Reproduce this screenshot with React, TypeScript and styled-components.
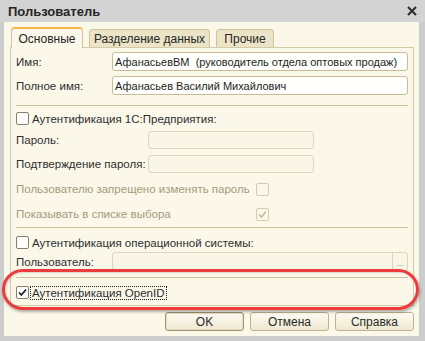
import styled, { createGlobalStyle } from 'styled-components';

const GlobalStyle = createGlobalStyle`
  html, body {
    margin: 0;
    padding: 0;
    background: #cfcfcf;
  }
  body {
    font-family: 'Liberation Sans', Arial, sans-serif;
    font-size: 11.5px;
    color: #2a2a2a;
  }
  * {
    box-sizing: border-box;
  }
`;

const Window = styled.div`
  position: relative;
  width: 425px;
  height: 341px;
  background: #cdcdcd;
  display: flex;
  flex-direction: column;
  overflow: hidden;
`;

const TitleBar = styled.div`
  height: 23px;
  padding: 0 8px;
  display: flex;
  align-items: center;
  justify-content: space-between;
  background: #d3d3d3;
`;

const Title = styled.span`
  font-weight: bold;
  font-size: 13px;
  color: #262626;
`;

const Body = styled.div`
  flex: 1;
  margin: 0 6px 5px 4px;
  padding: 5px 5px 5px 6px;
  background: #fbf8ea;
  display: flex;
  flex-direction: column;
`;

const TabStrip = styled.div`
  display: flex;
  align-items: flex-end;
  gap: 6px;
  height: 20px;
  padding-left: 1px;
  position: relative;
  z-index: 1;
`;

const Tab = styled.div<{ $active?: boolean; $width: number }>`
  width: ${(p) => p.$width}px;
  height: ${(p) => (p.$active ? 21 : 18)}px;
  margin-bottom: ${(p) => (p.$active ? -1 : 0)}px;
  display: flex;
  align-items: center;
  justify-content: center;
  padding-top: ${(p) => (p.$active ? 1 : 0)}px;
  border: 1px solid #cdc39c;
  border-bottom: none;
  border-top: ${(p) => (p.$active ? '2px solid #f2b84a' : '1px solid #cdc39c')};
  border-radius: 4px 4px 0 0;
  background: ${(p) => (p.$active ? '#fbf8ea' : '#ebe4c6')};
  color: #262626;
  font-size: 12px;
`;

const Panel = styled.div`
  border: 1px solid #d3caa6;
  padding: 4px 5px 6px 5px;
  display: flex;
  flex-direction: column;
`;

const Row = styled.div<{ $top?: number; $height: number }>`
  display: flex;
  align-items: center;
  margin-top: ${(p) => p.$top ?? 0}px;
  height: ${(p) => p.$height}px;
`;

const Label = styled.span<{ $width?: number; $disabled?: boolean }>`
  width: ${(p) => (p.$width ? `${p.$width}px` : 'auto')};
  flex-shrink: 0;
  color: ${(p) => (p.$disabled ? '#a59a7c' : '#2e2e2e')};
  white-space: nowrap;
`;

const Input = styled.div<{ $width?: number; $disabled?: boolean }>`
  ${(p) => (p.$width ? `width: ${p.$width}px;` : 'flex: 1;')}
  height: 100%;
  display: flex;
  align-items: center;
  padding: 0 2px;
  border: 1px solid ${(p) => (p.$disabled ? '#ddd6bb' : '#c6bd98')};
  border-radius: 3px;
  background: ${(p) => (p.$disabled ? '#f9f6e8' : '#fffffb')};
  color: #1e1e1e;
  font-size: 11px;
  white-space: pre;
  overflow: hidden;
`;

const InputText = styled.span`
  flex: 1;
`;

const SelectButton = styled.div`
  width: 15px;
  align-self: stretch;
  margin-right: -2px;
  border-left: 1px solid #ddd6bb;
  display: flex;
  align-items: flex-end;
  justify-content: center;
  color: #9a9a9a;
  font-size: 9px;
  line-height: 9px;
  padding-bottom: 2px;
`;

const Separator = styled.div<{ $top: number }>`
  height: 1px;
  margin-top: ${(p) => p.$top}px;
  background: #c9bf98;
`;

const Box = styled.div<{ $disabled?: boolean }>`
  width: 13px;
  height: 13px;
  flex-shrink: 0;
  border: 1px solid ${(p) => (p.$disabled ? '#d2cbb0' : '#86806a')};
  border-radius: 2px;
  background: ${(p) => (p.$disabled ? '#fbf8ea' : '#ffffff')};
  display: flex;
  align-items: center;
  justify-content: center;
`;

const CheckLabel = styled.span<{ $focused?: boolean }>`
  margin-left: 2px;
  padding: 0 1px;
  line-height: 12px;
  outline: ${(p) => (p.$focused ? '1px dotted #202020' : 'none')};
  outline-offset: 0;
  color: #2e2e2e;
  white-space: nowrap;
`;

const Footer = styled.div`
  display: flex;
  justify-content: flex-end;
  gap: 6px;
  margin-top: 6px;
`;

const Button = styled.div<{ $default?: boolean }>`
  width: 79px;
  height: 19px;
  display: flex;
  align-items: center;
  justify-content: center;
  border: 1px solid ${(p) => (p.$default ? '#9c9473' : '#bdb38f')};
  box-shadow: ${(p) => (p.$default ? 'inset 0 0 0 1px #e6dfc2' : 'none')};
  border-radius: 3px;
  background: linear-gradient(#fdfbf3, #eee8cf);
  color: #2a2a2a;
  font-size: 12px;
`;

const Highlight = styled.div`
  position: absolute;
  left: 2px;
  top: 269px;
  width: 417px;
  height: 41px;
  border: 3px solid #ec3b3c;
  border-radius: 21px;
  box-shadow: 1px 2px 3px rgba(0, 0, 0, 0.3), inset 1px 1px 2px rgba(0, 0, 0, 0.15);
  pointer-events: none;
`;

const Check = ({ color }: { color: string }) => (
  <svg width="11" height="11" viewBox="0 0 11 11">
    <path d="M2 5.5 L4.4 8 L9 2.5" fill="none" stroke={color} strokeWidth="1.8" />
  </svg>
);

const CloseIcon = () => (
  <svg width="10" height="10" viewBox="0 0 10 10">
    <path d="M1 1 L9 9 M9 1 L1 9" stroke="#2a2a2a" strokeWidth="2" />
  </svg>
);

export default function App() {
  return (
    <>
      <GlobalStyle />
      <Window>
        <TitleBar>
          <Title>Пользователь</Title>
          <CloseIcon />
        </TitleBar>
        <Body>
          <TabStrip>
            <Tab $active $width={72}>Основные</Tab>
            <Tab $width={121}>Разделение данных</Tab>
            <Tab $width={58}>Прочие</Tab>
          </TabStrip>
          <Panel>
            <Row $height={19}>
              <Label $width={96}>Имя:</Label>
              <Input>АфанасьевВМ  (руководитель отдела оптовых продаж)</Input>
            </Row>
            <Row $top={5} $height={19}>
              <Label $width={96}>Полное имя:</Label>
              <Input>Афанасьев Василий Михайлович</Input>
            </Row>
            <Separator $top={10} />
            <Row $top={6} $height={13}>
              <Box />
              <CheckLabel>Аутентификация 1С:Предприятия:</CheckLabel>
            </Row>
            <Row $top={6} $height={18}>
              <Label $width={132}>Пароль:</Label>
              <Input $width={166} $disabled />
            </Row>
            <Row $top={6} $height={18}>
              <Label $width={132}>Подтверждение пароля:</Label>
              <Input $width={166} $disabled />
            </Row>
            <Row $top={9} $height={14}>
              <Label $width={240} $disabled>Пользователю запрещено изменять пароль</Label>
              <Box $disabled />
            </Row>
            <Row $top={11} $height={14}>
              <Label $width={240} $disabled>Показывать в списке выбора</Label>
              <Box $disabled>
                <Check color="#c4bda4" />
              </Box>
            </Row>
            <Separator $top={6} />
            <Row $top={8} $height={13}>
              <Box />
              <CheckLabel>Аутентификация операционной системы:</CheckLabel>
            </Row>
            <Row $top={3} $height={19}>
              <Label $width={96}>Пользователь:</Label>
              <Input $disabled>
                <InputText />
                <SelectButton>...</SelectButton>
              </Input>
            </Row>
            <Separator $top={6} />
            <Row $top={8} $height={13}>
              <Box>
                <Check color="#222222" />
              </Box>
              <CheckLabel $focused>Аутентификация OpenID</CheckLabel>
            </Row>
          </Panel>
          <Footer>
            <Button $default>OK</Button>
            <Button>Отмена</Button>
            <Button>Справка</Button>
          </Footer>
        </Body>
        <Highlight />
      </Window>
    </>
  );
}
